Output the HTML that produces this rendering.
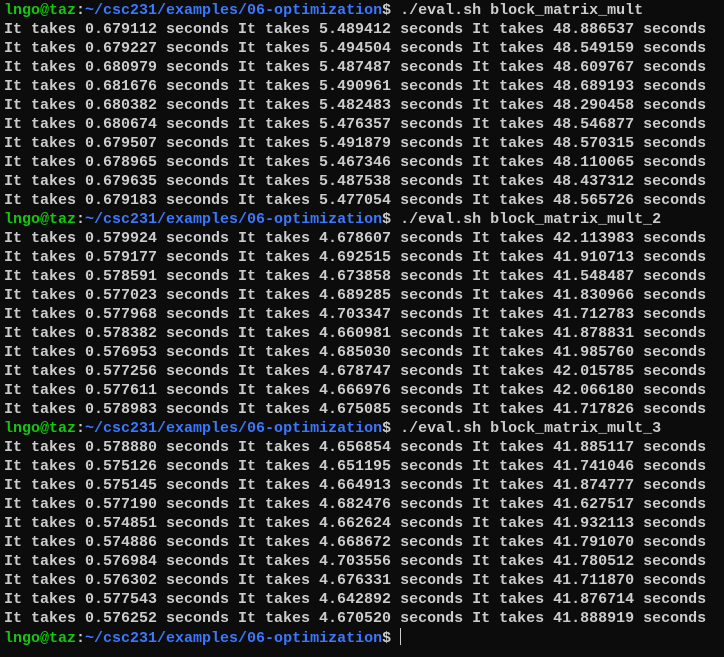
<!DOCTYPE html>
<html><head><meta charset="utf-8"><style>
html,body{margin:0;padding:0;background:#0c0c0c;width:724px;height:657px;overflow:hidden}
pre{margin:0;padding:1px 0 0 4px;font-family:"Liberation Mono",monospace;font-size:15px;line-height:19px;color:#cccccc;font-weight:bold}
.g{color:#16c60c}.b{color:#3b78ff}
.cur{display:inline-block;width:1px;height:17px;background:#ccc;vertical-align:-3px;margin-left:9px}
</style></head><body><pre><span class="g">lngo@taz</span>:<span class="b">~/csc231/examples/06-optimization</span>$ ./eval.sh block_matrix_mult
It takes 0.679112 seconds It takes 5.489412 seconds It takes 48.886537 seconds
It takes 0.679227 seconds It takes 5.494504 seconds It takes 48.549159 seconds
It takes 0.680979 seconds It takes 5.487487 seconds It takes 48.609767 seconds
It takes 0.681676 seconds It takes 5.490961 seconds It takes 48.689193 seconds
It takes 0.680382 seconds It takes 5.482483 seconds It takes 48.290458 seconds
It takes 0.680674 seconds It takes 5.476357 seconds It takes 48.546877 seconds
It takes 0.679507 seconds It takes 5.491879 seconds It takes 48.570315 seconds
It takes 0.678965 seconds It takes 5.467346 seconds It takes 48.110065 seconds
It takes 0.679635 seconds It takes 5.487538 seconds It takes 48.437312 seconds
It takes 0.679183 seconds It takes 5.477054 seconds It takes 48.565726 seconds
<span class="g">lngo@taz</span>:<span class="b">~/csc231/examples/06-optimization</span>$ ./eval.sh block_matrix_mult_2
It takes 0.579924 seconds It takes 4.678607 seconds It takes 42.113983 seconds
It takes 0.579177 seconds It takes 4.692515 seconds It takes 41.910713 seconds
It takes 0.578591 seconds It takes 4.673858 seconds It takes 41.548487 seconds
It takes 0.577023 seconds It takes 4.689285 seconds It takes 41.830966 seconds
It takes 0.577968 seconds It takes 4.703347 seconds It takes 41.712783 seconds
It takes 0.578382 seconds It takes 4.660981 seconds It takes 41.878831 seconds
It takes 0.576953 seconds It takes 4.685030 seconds It takes 41.985760 seconds
It takes 0.577256 seconds It takes 4.678747 seconds It takes 42.015785 seconds
It takes 0.577611 seconds It takes 4.666976 seconds It takes 42.066180 seconds
It takes 0.578983 seconds It takes 4.675085 seconds It takes 41.717826 seconds
<span class="g">lngo@taz</span>:<span class="b">~/csc231/examples/06-optimization</span>$ ./eval.sh block_matrix_mult_3
It takes 0.578880 seconds It takes 4.656854 seconds It takes 41.885117 seconds
It takes 0.575126 seconds It takes 4.651195 seconds It takes 41.741046 seconds
It takes 0.575145 seconds It takes 4.664913 seconds It takes 41.874777 seconds
It takes 0.577190 seconds It takes 4.682476 seconds It takes 41.627517 seconds
It takes 0.574851 seconds It takes 4.662624 seconds It takes 41.932113 seconds
It takes 0.574886 seconds It takes 4.668672 seconds It takes 41.791070 seconds
It takes 0.576984 seconds It takes 4.703556 seconds It takes 41.780512 seconds
It takes 0.576302 seconds It takes 4.676331 seconds It takes 41.711870 seconds
It takes 0.577543 seconds It takes 4.642892 seconds It takes 41.876714 seconds
It takes 0.576252 seconds It takes 4.670520 seconds It takes 41.888919 seconds
<span class="g">lngo@taz</span>:<span class="b">~/csc231/examples/06-optimization</span>$<span class="cur"></span></pre></body></html>
